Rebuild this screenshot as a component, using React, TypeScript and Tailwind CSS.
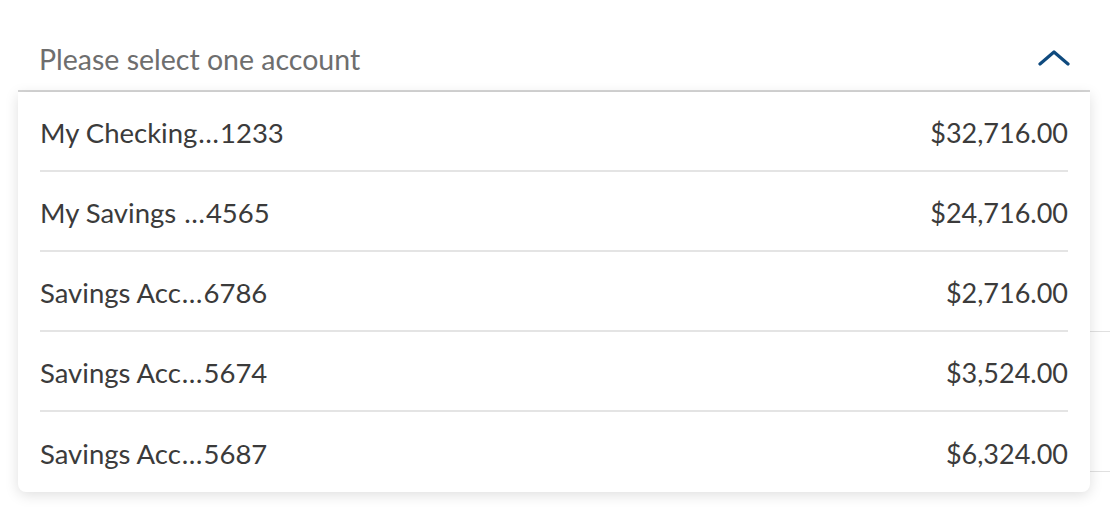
import React from "react";

const accounts = [
  { name: "My Checking", last: "1233", amount: "$32,716.00" },
  { name: "My Savings ", last: "4565", amount: "$24,716.00" },
  { name: "Savings Acc", last: "6786", amount: "$2,716.00" },
  { name: "Savings Acc", last: "5674", amount: "$3,524.00" },
  { name: "Savings Acc", last: "5687", amount: "$6,324.00" },
];

export default function App() {
  return (
    <div
      className="relative w-[1110px] h-[520px] bg-white overflow-hidden"
      style={{ fontFamily: "Lato, 'Noto Sans', sans-serif" }}
    >
      {/* underlying page content */}
      <div className="flex flex-col pl-[18px]">
        <div className="h-[92px]" />
        <div className="h-[240px] border-b border-[#e0e0e0]" />
        <div className="h-[140px] border-b border-[#e0e0e0]" />
      </div>

      {/* select field */}
      <div className="absolute left-[18px] top-0 w-[1072px]">
        <div className="h-[92px] flex items-end justify-between pl-[21px] pr-[20px] pb-[13px] border-b-2 border-[#d6d6d6] bg-white">
          <span className="text-[28.5px] leading-[36px] text-[#6e6e6e]">
            Please select one account
          </span>
          <svg
            width="32"
            height="18"
            viewBox="0 0 32 18"
            className="mb-[10px]"
            fill="none"
          >
            <path
              d="M2 15 L16 3 L30 15"
              stroke="#0f4a7e"
              strokeWidth="3.2"
              strokeLinecap="round"
              strokeLinejoin="round"
            />
          </svg>
        </div>
        <div className="bg-white rounded-b-[8px] shadow-[0_3px_14px_rgba(0,0,0,0.13)] px-[22px]">
          {accounts.map((a, i) => (
            <div
              key={i}
              className={`h-[80px] flex items-center justify-between pt-[4px] text-[27.5px] text-[#3b3b3b] ${
                i < accounts.length - 1 ? "border-b-2 border-[#e4e4e4]" : ""
              }`}
            >
              <span className="whitespace-pre">
                {a.name}
                <span className="mx-[1px]">…</span>
                {a.last}
              </span>
              <span className="text-[27px]">{a.amount}</span>
            </div>
          ))}
        </div>
      </div>
    </div>
  );
}
